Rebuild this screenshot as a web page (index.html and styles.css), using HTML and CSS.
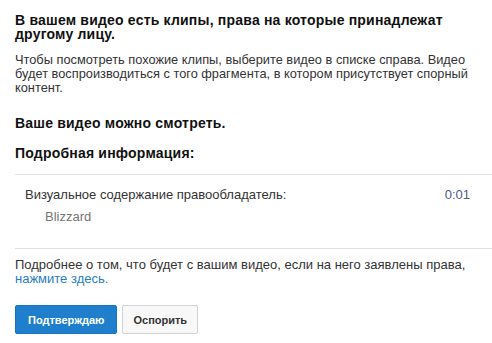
FILE: index.html
```html
<!DOCTYPE html>
<html lang="ru">
<head>
<meta charset="UTF-8">
<title>Заявка на контент</title>
<link rel="stylesheet" href="styles.css">
</head>
<body>
<div class="claim">
  <h2 class="claim-title">В вашем видео есть клипы, права на которые принадлежат другому лицу.</h2>
  <p class="claim-text">Чтобы посмотреть похожие клипы, выберите видео в списке справа. Видео будет воспроизводиться с того фрагмента, в котором присутствует спорный контент.</p>

  <h3 class="claim-status">Ваше видео можно смотреть.</h3>
  <h3 class="claim-subtitle">Подробная информация:</h3>

  <div class="claim-list">
    <div class="claim-row">
      <div class="claim-info">
        <div class="claim-type">Визуальное содержание правообладатель:</div>
        <div class="claim-owner">Blizzard</div>
      </div>
      <a class="claim-time" href="#">0:01</a>
    </div>
  </div>

  <p class="claim-more">Подробнее о том, что будет с вашим видео, если на него заявлены права, <a href="#">нажмите здесь.</a></p>

  <div class="claim-actions">
    <button class="btn btn-primary">Подтверждаю</button>
    <button class="btn btn-default">Оспорить</button>
  </div>
</div>
</body>
</html>
```

FILE: styles.css
```css
body {
  margin: 0;
  background: #fff;
  font-family: Arial, "Liberation Sans", sans-serif;
  color: #222;
}

.claim {
  padding: 13px 0 0 15px;
}

.claim-title {
  margin: 0 30px 0 0;
  font-size: 14px;
  line-height: 14px;
  letter-spacing: 0.2px;
  font-weight: bold;
  color: #111;
}

.claim-text {
  margin: 12px 10px 0 0;
  font-size: 12.8px;
  line-height: 14px;
  color: #333;
}

.claim-status,
.claim-subtitle {
  margin: 0;
  font-size: 14px;
  line-height: 15px;
  letter-spacing: 0.2px;
  font-weight: bold;
  color: #111;
}

.claim-status {
  margin-top: 21px;
}

.claim-subtitle {
  margin-top: 15px;
}

.claim-list {
  margin-top: 13px;
  border-top: 1px solid #e2e2e2;
  border-bottom: 1px solid #e2e2e2;
}

.claim-row {
  display: flex;
  justify-content: space-between;
  padding: 12px 22px 24px 10px;
}

.claim-type {
  font-size: 13px;
  line-height: 15px;
  color: #333;
}

.claim-owner {
  margin: 7px 0 0 20px;
  font-size: 13px;
  line-height: 15px;
  color: #767676;
}

.claim-time {
  font-size: 13px;
  line-height: 15px;
  color: #4f5a8a;
  text-decoration: none;
}

.claim-more {
  margin: 9px 15px 0 0;
  font-size: 13px;
  line-height: 14px;
  color: #333;
}

.claim-more a {
  color: #2a7dc2;
  text-decoration: none;
}

.claim-actions {
  display: flex;
  gap: 5px;
  margin-top: 19px;
}

.btn {
  height: 29px;
  padding: 0 10px;
  border-radius: 2px;
  font-family: Arial, "Liberation Sans", sans-serif;
  font-size: 11px;
  font-weight: bold;
  cursor: pointer;
}

.btn-primary {
  border: 1px solid #1a73bd;
  background: #1f7fcc;
  color: #fff;
  padding: 0 12px;
}

.btn-default {
  border: 1px solid #d3d3d3;
  background: #f8f8f8;
  color: #333;
}
```
